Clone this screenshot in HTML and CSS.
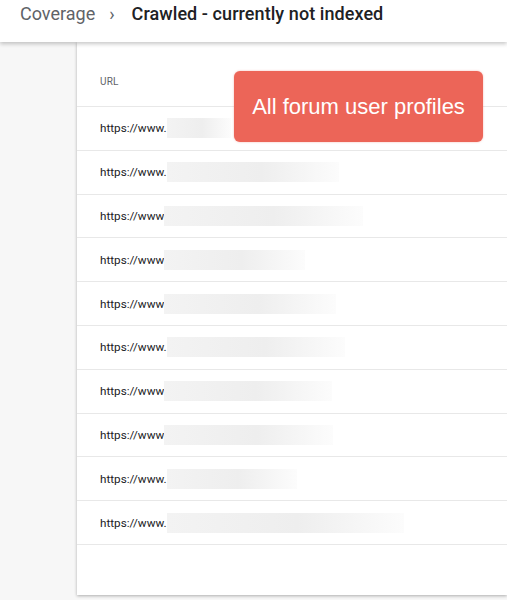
FILE: index.html
```html
<!DOCTYPE html>
<html>
<head>
<meta charset="utf-8">
<link rel="stylesheet" href="styles.css">
</head>
<body>
<header class="topbar">
  <span class="crumb">Coverage</span>
  <span class="chev">›</span>
  <span class="title">Crawled - currently not indexed</span>
</header>
<main class="main">
  <div class="gutter"></div>
  <section class="card">
    <div class="thead">URL</div>
    <div class="row"><span class="url">https://www.</span><span class="blur" style="width:64px"></span></div>
    <div class="row"><span class="url">https://www.</span><span class="blur" style="width:172px"></span></div>
    <div class="row"><span class="url">https://www</span><span class="blur" style="width:199px"></span></div>
    <div class="row"><span class="url">https://www</span><span class="blur" style="width:141px"></span></div>
    <div class="row"><span class="url">https://www</span><span class="blur" style="width:172px"></span></div>
    <div class="row"><span class="url">https://www.</span><span class="blur" style="width:178px"></span></div>
    <div class="row"><span class="url">https://www</span><span class="blur" style="width:168px"></span></div>
    <div class="row"><span class="url">https://www</span><span class="blur" style="width:169px"></span></div>
    <div class="row"><span class="url">https://www.</span><span class="blur" style="width:130px"></span></div>
    <div class="row"><span class="url">https://www.</span><span class="blur" style="width:237px"></span></div>
    <div class="note">All forum user profiles</div>
  </section>
</main>
</body>
</html>
```

FILE: styles.css
```css
html, body {
  margin: 0;
  padding: 0;
  background: #f7f7f7;
  font-family: Roboto, "Liberation Sans", Arial, sans-serif;
  overflow: hidden;
}
.topbar {
  position: relative;
  z-index: 2;
  height: 42px;
  box-sizing: border-box;
  background: #fff;
  display: flex;
  align-items: flex-start;
  padding: 2px 0 0 20px;
  box-shadow: 0 2px 4px rgba(0,0,0,0.22);
  font-size: 18px;
  line-height: 24px;
}
.crumb {
  color: #5f6368;
}
.chev {
  color: #5f6368;
  margin: 0 17px 0 14px;
  font-size: 18px;
}
.title {
  color: #202124;
  font-weight: 500;
  letter-spacing: 0.07px;
}
.main {
  display: flex;
  height: 553px;
  padding-bottom: 5px;
}
.gutter {
  width: 77px;
  flex: none;
}
.card {
  position: relative;
  flex: 1;
  background: #fff;
  box-shadow: 0 1px 3px rgba(0,0,0,0.3);
}
.thead {
  height: 65px;
  box-sizing: border-box;
  border-bottom: 1px solid #e8e8e8;
  padding: 34px 0 0 23px;
  font-size: 10px;
  color: #5f6368;
  letter-spacing: 0.2px;
}
.row {
  height: 43.8px;
  box-sizing: border-box;
  border-bottom: 1px solid #e8e8e8;
  display: flex;
  align-items: center;
  padding-left: 23px;
  font-size: 11.7px;
  color: #202124;
}
.url {
  flex: none;
}
.blur {
  display: inline-block;
  height: 20px;
  background: linear-gradient(90deg, #f3f3f3 0%, #eeeeee 55%, #fcfcfc 100%);
}
.note {
  position: absolute;
  left: 157px;
  top: 29px;
  width: 249px;
  height: 71px;
  box-sizing: border-box;
  background: #ec6558;
  border-radius: 6px;
  color: #fff;
  font-family: "Liberation Sans", Arial, sans-serif;
  font-size: 22px;
  display: flex;
  align-items: center;
  justify-content: center;
  box-shadow: 0 0 2px rgba(236,101,88,0.5);
}
```
